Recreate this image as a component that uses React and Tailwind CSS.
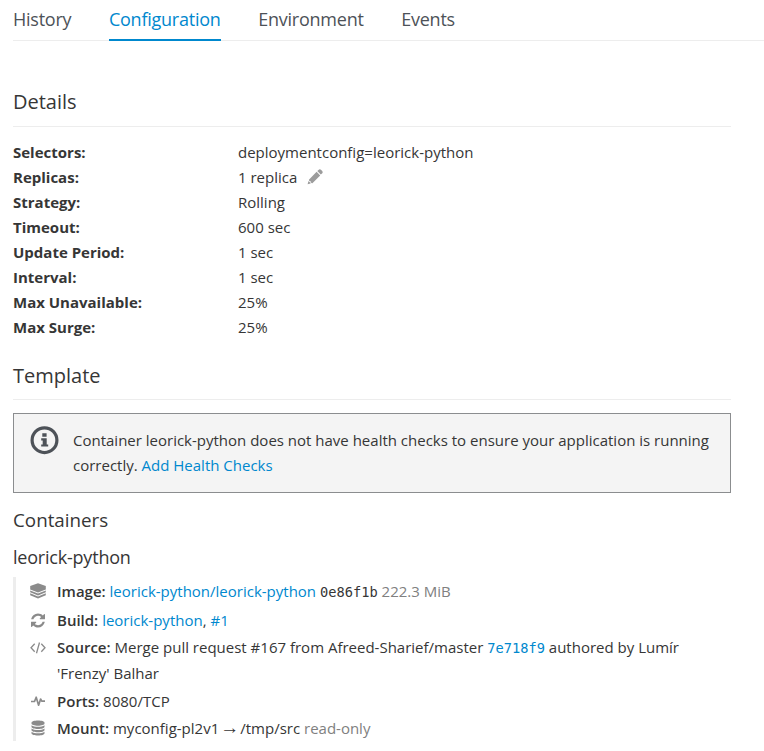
import React from "react";

const link = "text-[#0088ce]";
const mono = "font-['DejaVu_Sans_Mono',monospace] text-[13.7px]";

function Pencil() {
  return (
    <svg className="ml-[10px] inline-block h-4 w-4 align-[-2px]" viewBox="0 0 16 16" fill="#9c9c9c">
      <path d="M11.5 1a1.900 1.900 0 0 1 2.700 0l.8.8a1.900 1.900 0 0 1 0 2.700l-1.200 1.100-3.500-3.500z" />
      <path d="M9.600 2.800l3.600 3.600-7.800 7.800-1.200-.2-.2-1.600-1.600-.2-.5-1.500zM1.500 11.800l.5 1.300 1.400.2.200 1.300L.6 15.300z" />
    </svg>
  );
}

function InfoIcon() {
  return (
    <svg className="h-[29px] w-[29px] shrink-0" viewBox="0 0 29 29">
      <circle cx="14.5" cy="14.2" r="12.4" fill="none" stroke="#4d5258" strokeWidth="3.2" />
      <path fill="#4d5258" d="M12.3 7.200h4.300v3.500h-4.300zM11.200 12.200h5.500v6.200h1.500v2.200h-7v-2.200h1.500v-4h-1.500z" />
    </svg>
  );
}

function Layers() {
  return (
    <svg className="relative -top-px h-4 w-4" viewBox="0 0 16 16" fill="#8b8b8b">
      <path d="M8 .2l7.800 2.800v3.400L8 9.500.2 6.400V3z" />
      <path d="M.2 7.400L8 10.500l7.800-3.100v1.900L8 12.400.2 9.300zM.2 10.300L8 13.400l7.800-3.100v1.900L8 15.400.2 12.200z" />
    </svg>
  );
}

function Refresh() {
  return (
    <svg className="h-[15px] w-[14px]" viewBox="0 128 1536 1536" fill="#8b8b8b">
      <path d="M1511 1056q0 5-1 7-64 268-268 434.500t-478 166.500q-146 0-282.500-55t-243.500-157l-129 129q-19 19-45 19t-45-19-19-45v-448q0-26 19-45t45-19h448q26 0 45 19t19 45-19 45l-137 137q71 66 161 102t187 36q134 0 250-65t186-179q11-17 53-117 8-23 30-23h192q13 0 22.500 9.500t9.500 22.500zm25-800v448q0 26-19 45t-45 19h-448q-26 0-45-19t-19-45 19-45l138-138q-148-137-349-137-134 0-250 65t-186 179q-11 17-53 117-8 23-30 23h-199q-13 0-22.500-9.500t-9.500-22.500v-7q65-268 270-434.500t480-166.500q146 0 284 55.500t245 156.500l130-129q19-19 45-19t45 19 19 45z" />
    </svg>
  );
}

function Code() {
  return (
    <svg className="h-4 w-4" viewBox="0 0 16 16" fill="none" stroke="#8b8b8b" strokeWidth="1.3">
      <path d="M4.700 3.800L1 7.800l3.700 4M11.300 3.800L15 7.800l-3.700 4M9.500 2.500L6.500 13.200" />
    </svg>
  );
}

function Pulse() {
  return (
    <svg className="h-4 w-4" viewBox="0 0 16 16" fill="none" stroke="#8b8b8b" strokeWidth="1.700" strokeLinejoin="round">
      <path d="M1 7.500h3.500L6.200 3.200l2.400 8L10.600 5l1.100 2.200H15" />
    </svg>
  );
}

function Database() {
  return (
    <svg className="relative -top-px h-4 w-4" viewBox="0 0 16 16" fill="#8b8b8b">
      <path d="M1.500 2.800C1.500 1.400 4.400.500 8 .500s6.500.900 6.500 2.300v.7C14.500 4.800 11.600 5.700 8 5.700S1.500 4.800 1.500 3.500z" />
      <path d="M1.500 5.200C3 6.300 5.400 6.700 8 6.700s5-.4 6.500-1.500v1.500C14.500 8 11.600 9 8 9S1.500 8 1.500 6.700zM1.500 8.500C3 9.600 5.400 10 8 10s5-.4 6.500-1.500V10c0 1.300-2.900 2.300-6.500 2.300S1.500 11.300 1.500 10zM1.500 11.800c1.500 1.100 3.900 1.500 6.500 1.500s5-.4 6.500-1.500v1.500c0 1.300-2.900 2.300-6.500 2.300s-6.500-1-6.500-2.300z" />
    </svg>
  );
}

const details = [
  ["Selectors:", "deploymentconfig=leorick-python"],
  ["Replicas:", <>1 replica<Pencil /></>],
  ["Strategy:", "Rolling"],
  ["Timeout:", "600 sec"],
  ["Update Period:", "1 sec"],
  ["Interval:", "1 sec"],
  ["Max Unavailable:", "25%"],
  ["Max Surge:", "25%"],
];

function Row({ icon, label, className, children }) {
  return (
    <div className={`flex ${className}`}>
      <span className="flex h-[25px] w-4 shrink-0 items-center justify-center">{icon}</span>
      <div className="ml-[11px] leading-[25px]">
        <b className="font-semibold">{label}</b> {children}
      </div>
    </div>
  );
}

export default function App() {
  return (
    <div className="h-[751px] overflow-hidden bg-white pl-[13px] font-['Open_Sans',sans-serif] text-[15px] leading-[25px] text-[#363636]">
      <nav className="flex h-[41px] gap-[37.600px] border-b border-[#ededed] text-[18px] tracking-[-0.240px] text-[#4d5258]">
        <span className="h-[41px] pt-[7px]">History</span>
        <span className="h-[41px] border-b-2 border-[#0088ce] pt-[7px] text-[#0088ce]">Configuration</span>
        <span className="h-[41px] pt-[7px]">Environment</span>
        <span className="h-[41px] pt-[7px]">Events</span>
      </nav>
      <main className="w-[718px]">
        <h2 className="mt-[48px] h-[38px] border-b border-[#ededed] text-[20px] leading-[26px]">Details</h2>
        <dl className="mt-[13px]">
          {details.map(([k, v]) => (
            <div key={k} className="flex h-[25px]">
              <dt className="w-[225px] font-bold">{k}</dt>
              <dd>{v}</dd>
            </div>
          ))}
        </dl>
        <h2 className="mt-[23px] h-[37px] border-b border-[#ededed] text-[20px] leading-[26px]">Template</h2>
        <div className="mt-[13px] flex h-[80px] border border-[#8b8d8f] bg-[#f4f4f4] pt-[12px] pl-[16px]">
          <InfoIcon />
          <p className="ml-[14px] pt-[2px]">
            Container leorick-python does not have health checks to ensure your application is running
            <br />
            correctly. <span className={link}>Add Health Checks</span>
          </p>
        </div>
        <h3 className="mt-[14px] text-[18.8px] leading-[26px]">Containers</h3>
        <h4 className="mt-[11px] text-[18px] leading-[26px] tracking-[-0.210px]">leorick-python</h4>
        <section className="mt-[7px] h-[164px] border-l-3 border-[#ededed] pl-[14px]">
          <Row icon={<Layers />} label="Image:" className="h-[31px] pt-[2px]">
            <span className={link}>leorick-python/leorick-python</span> <span className={mono}>0e86f1b</span>{" "}
            <span className="text-[#808080]">222.3 MiB</span>
          </Row>
          <Row icon={<Refresh />} label="Build:" className="h-[27px]">
            <span className={link}>leorick-python</span>, <span className={link}>#1</span>
          </Row>
          <Row icon={<Code />} label="Source:" className="h-[54px]">
            Merge pull request #167 from Afreed-Sharief/master <span className={`${link} ${mono}`}>7e718f9</span> authored by Lumír
            <br />
            'Frenzy' Balhar
          </Row>
          <Row icon={<Pulse />} label="Ports:" className="h-[27px]">8080/TCP</Row>
          <Row icon={<Database />} label="Mount:" className="h-[25px]">
            myconfig-pl2v1<span className="mx-[1px] inline-block w-[19px] text-center font-['Liberation_Sans'] text-[19px] leading-none">→</span>/tmp/src <span className="text-[#808080]">read-only</span>
          </Row>
        </section>
      </main>
    </div>
  );
}
